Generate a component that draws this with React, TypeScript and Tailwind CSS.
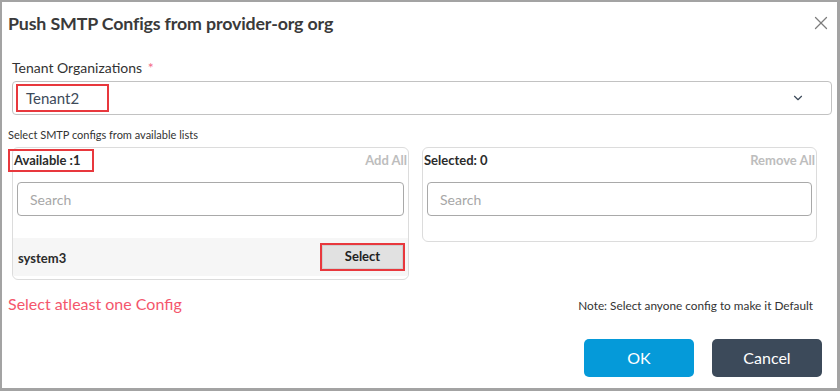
import { X, ChevronDown } from "lucide-react";

function ListPanel({
  title,
  action,
  annotate,
  children,
}: {
  title: string;
  action: string;
  annotate?: boolean;
  children?: React.ReactNode;
}) {
  return (
    <div className="flex-1 rounded-md border border-[#dcdcdc] flex flex-col">
      <div className="relative flex items-center justify-between h-[22px] mt-[2px]">
        <span className="text-[13px] font-bold text-[#2b2b2b] pl-px">{title}</span>
        {annotate && (
          <span className="absolute -left-[5px] -top-px w-[86px] h-[23px] border-2 border-[#e8383d]" />
        )}
        <span className="text-[13px] font-bold text-[#bdbdbd] pr-px">{action}</span>
      </div>
      <div className="px-[4px] mt-[10px]">
        <div className="h-[34px] rounded-[4px] border border-[#a9a9a9] flex items-center px-3 text-[14px] text-[#a7a7a7]">
          Search
        </div>
      </div>
      {children ?? <div className="h-[25px]" />}
    </div>
  );
}

export default function App() {
  return (
    <div
      className="w-[840px] h-[391px] bg-white border-l-2 border-t-2 border-r-[3px] border-b-[3px] border-[#a3a3a3] flex flex-col"
      style={{ fontFamily: "Lato, 'Open Sans', sans-serif" }}
    >
      {/* Header */}
      <div className="flex items-center justify-between h-[24px] mt-[9px] pl-[6px] pr-[5px]">
        <h1 className="text-[17.8px] font-bold text-[#3a3a3a] tracking-[-0.15px]">
          Push SMTP Configs from provider-org org
        </h1>
        <X className="h-[22px] w-[22px] text-[#7d7d7d]" strokeWidth={1.4} />
      </div>

      <div className="pl-[10px] pr-[5px] mt-[24px]">
        <div className="text-[14px] text-[#333] h-[20px] leading-[20px] -mt-[1px]">
          Tenant Organizations <span className="text-[#f36b88] ml-[2px]">*</span>
        </div>
        <div className="relative mt-[3px] h-[34px] rounded-[4px] border border-[#c2c2c2] flex items-center justify-between pl-[13px] pr-[26px]">
          <span className="text-[15px] text-[#3d4a5a]">Tenant2</span>
          <span className="absolute left-[3px] top-[2px] w-[93px] h-[28px] border-2 border-[#e8383d]" />
          <ChevronDown className="h-[14px] w-[14px] text-[#3d4a5a]" strokeWidth={2} />
        </div>
      </div>

      <div className="pl-[6px] mt-[13px] text-[11px] text-[#333] leading-[14px]">
        Select SMTP configs from available lists
      </div>

      <div className="flex items-start gap-[13px] pl-[10px] pr-[20px] mt-[5px]">
        <ListPanel title="Available :1" action="Add All" annotate>
          <div className="mt-[22px] mb-[3px] h-[38px] bg-[#f6f6f6] flex items-center justify-between pl-[5px] pr-[5px]">
            <span className="text-[13px] font-bold text-[#2b2b2b] mt-[4px]">system3</span>
            <div className="relative">
              <div className="w-[81px] h-[24px] bg-[#e1e1e1] border border-[#cfcfcf] flex items-center justify-center text-[13px] font-bold text-[#222]">
                Select
              </div>
              <span className="absolute -left-[2px] -top-[2px] w-[85px] h-[28px] border-2 border-[#e8383d]" />
            </div>
          </div>
        </ListPanel>
        <div className="flex-1 flex">
          <ListPanel title="Selected: 0" action="Remove All" />
        </div>
      </div>

      <div className="flex items-end justify-between pl-[6px] pr-[24px] mt-[12px]">
        <span className="text-[16px] text-[#f4566c]">Select atleast one Config</span>
        <span className="text-[11.8px] text-[#333] mb-[1px]">Note: Select anyone config to make it Default</span>
      </div>

      <div className="flex justify-end gap-[18px] pr-[15px] mt-[23px]">
        <button className="w-[110px] h-[38px] rounded-[5px] bg-[#059ad9] text-white text-[16px]">OK</button>
        <button className="w-[110px] h-[38px] rounded-[5px] bg-[#3c4a5a] text-white text-[16px]">Cancel</button>
      </div>
    </div>
  );
}
